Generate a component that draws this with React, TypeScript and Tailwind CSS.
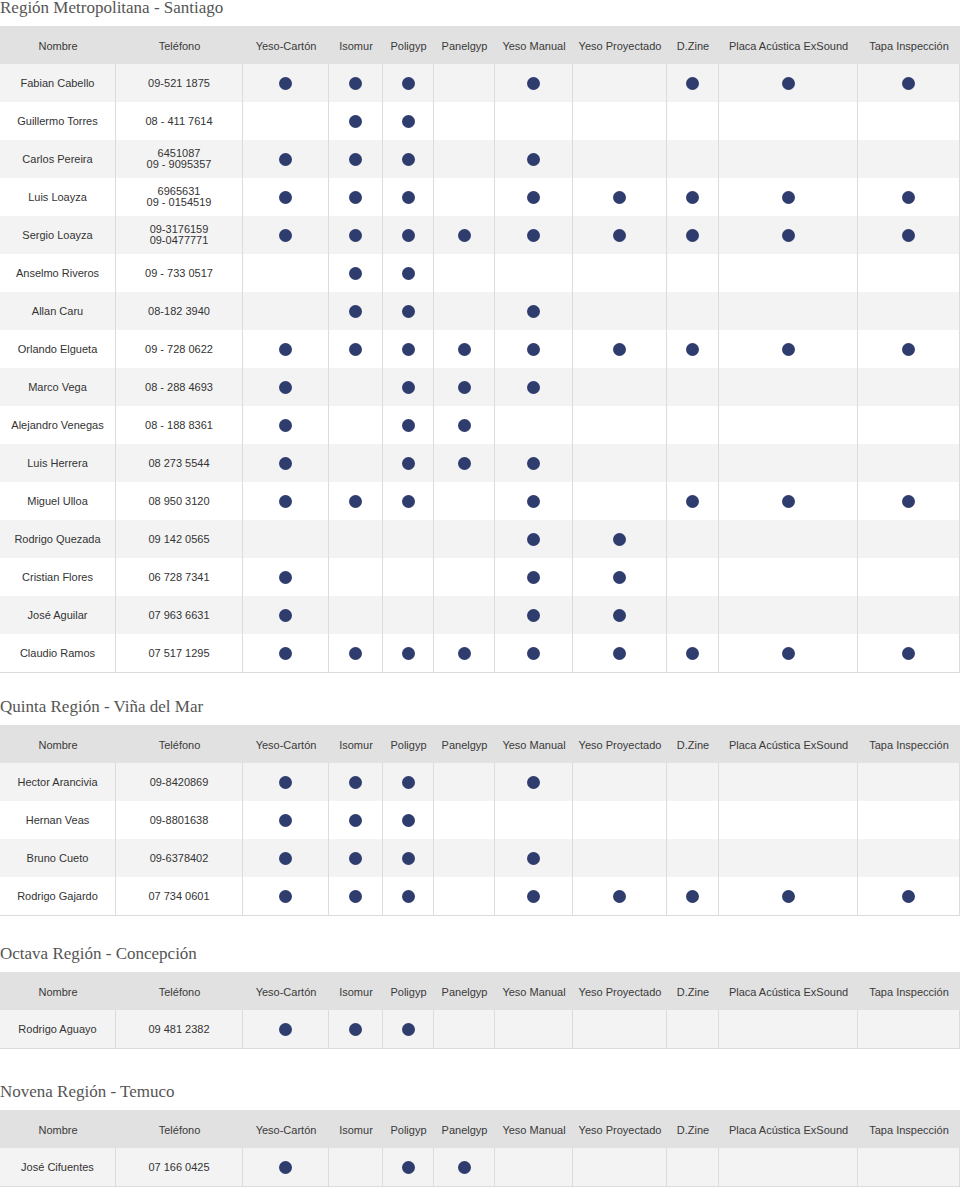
import React from 'react';

const columns = [
  'Yeso-Cartón',
  'Isomur',
  'Poligyp',
  'Panelgyp',
  'Yeso Manual',
  'Yeso Proyectado',
  'D.Zine',
  'Placa Acústica ExSound',
  'Tapa Inspección',
];

type Row = { name: string; phone: string[]; has: number[] };

const sections: { title: string; gap: string; rows: Row[] }[] = [
  {
    title: 'Región Metropolitana - Santiago',
    gap: 'mt-0',
    rows: [
      { name: 'Fabian Cabello', phone: ['09-521 1875'], has: [1, 1, 1, 0, 1, 0, 1, 1, 1] },
      { name: 'Guillermo Torres', phone: ['08 - 411 7614'], has: [0, 1, 1, 0, 0, 0, 0, 0, 0] },
      { name: 'Carlos Pereira', phone: ['6451087', '09 - 9095357'], has: [1, 1, 1, 0, 1, 0, 0, 0, 0] },
      { name: 'Luis Loayza', phone: ['6965631', '09 - 0154519'], has: [1, 1, 1, 0, 1, 1, 1, 1, 1] },
      { name: 'Sergio Loayza', phone: ['09-3176159', '09-0477771'], has: [1, 1, 1, 1, 1, 1, 1, 1, 1] },
      { name: 'Anselmo Riveros', phone: ['09 - 733 0517'], has: [0, 1, 1, 0, 0, 0, 0, 0, 0] },
      { name: 'Allan Caru', phone: ['08-182 3940'], has: [0, 1, 1, 0, 1, 0, 0, 0, 0] },
      { name: 'Orlando Elgueta', phone: ['09 - 728 0622'], has: [1, 1, 1, 1, 1, 1, 1, 1, 1] },
      { name: 'Marco Vega', phone: ['08 - 288 4693'], has: [1, 0, 1, 1, 1, 0, 0, 0, 0] },
      { name: 'Alejandro Venegas', phone: ['08 - 188 8361'], has: [1, 0, 1, 1, 0, 0, 0, 0, 0] },
      { name: 'Luis Herrera', phone: ['08 273 5544'], has: [1, 0, 1, 1, 1, 0, 0, 0, 0] },
      { name: 'Miguel Ulloa', phone: ['08 950 3120'], has: [1, 1, 1, 0, 1, 0, 1, 1, 1] },
      { name: 'Rodrigo Quezada', phone: ['09 142 0565'], has: [0, 0, 0, 0, 1, 1, 0, 0, 0] },
      { name: 'Cristian Flores', phone: ['06 728 7341'], has: [1, 0, 0, 0, 1, 1, 0, 0, 0] },
      { name: 'José Aguilar', phone: ['07 963 6631'], has: [1, 0, 0, 0, 1, 1, 0, 0, 0] },
      { name: 'Claudio Ramos', phone: ['07 517 1295'], has: [1, 1, 1, 1, 1, 1, 1, 1, 1] },
    ],
  },
  {
    title: 'Quinta Región - Viña del Mar',
    gap: 'mt-[26px]',
    rows: [
      { name: 'Hector Arancivia', phone: ['09-8420869'], has: [1, 1, 1, 0, 1, 0, 0, 0, 0] },
      { name: 'Hernan Veas', phone: ['09-8801638'], has: [1, 1, 1, 0, 0, 0, 0, 0, 0] },
      { name: 'Bruno Cueto', phone: ['09-6378402'], has: [1, 1, 1, 0, 1, 0, 0, 0, 0] },
      { name: 'Rodrigo Gajardo', phone: ['07 734 0601'], has: [1, 1, 1, 0, 1, 1, 1, 1, 1] },
    ],
  },
  {
    title: 'Octava Región - Concepción',
    gap: 'mt-[30px]',
    rows: [{ name: 'Rodrigo Aguayo', phone: ['09 481 2382'], has: [1, 1, 1, 0, 0, 0, 0, 0, 0] }],
  },
  {
    title: 'Novena Región - Temuco',
    gap: 'mt-[35px]',
    rows: [{ name: 'José Cifuentes', phone: ['07 166 0425'], has: [1, 0, 1, 1, 0, 0, 0, 0, 0] }],
  },
];

const grid =
  'grid grid-cols-[116px_127px_86px_54px_51px_61px_78px_94px_52px_139px_102px]';

function Dot() {
  return <span className="block w-[13px] h-[13px] rounded-full bg-[#2f3c6e]" />;
}

function Table({ rows }: { rows: Row[] }) {
  return (
    <div className="border-b border-[#dcdcdc]">
      <div className={`${grid} h-[38px] bg-[#e1e1e1] text-[#3a3a3a] pt-[2px]`}>
        <div className="flex items-center justify-center">Nombre</div>
        <div className="flex items-center justify-center">Teléfono</div>
        {columns.map((c) => (
          <div key={c} className="flex items-center justify-center whitespace-nowrap">
            {c}
          </div>
        ))}
      </div>
      {rows.map((r, i) => (
        <div
          key={r.name}
          className={`${grid} h-[38px] ${i % 2 === 0 ? 'bg-[#f3f3f3]' : 'bg-white'}`}
        >
          <div className="flex items-center justify-center border-r border-[#dcdcdc]">{r.name}</div>
          <div className="flex flex-col items-center justify-center border-r border-[#dcdcdc] leading-[11px]">
            {r.phone.map((p) => (
              <span key={p}>{p}</span>
            ))}
          </div>
          {r.has.map((h, j) => (
            <div key={j} className="flex items-center justify-center border-r border-[#dcdcdc]">
              {h ? <Dot /> : null}
            </div>
          ))}
        </div>
      ))}
    </div>
  );
}

export default function App() {
  return (
    <div className="w-[960px] bg-white text-[11px] text-[#333] font-['Liberation_Sans',Arial,sans-serif]">
      {sections.map((s) => (
        <section key={s.title} className={s.gap}>
          <h2 className="h-[16px] mb-[10px] text-[17px] leading-[16px] text-[#555] font-['Liberation_Serif',serif]">
            {s.title}
          </h2>
          <Table rows={s.rows} />
        </section>
      ))}
    </div>
  );
}
